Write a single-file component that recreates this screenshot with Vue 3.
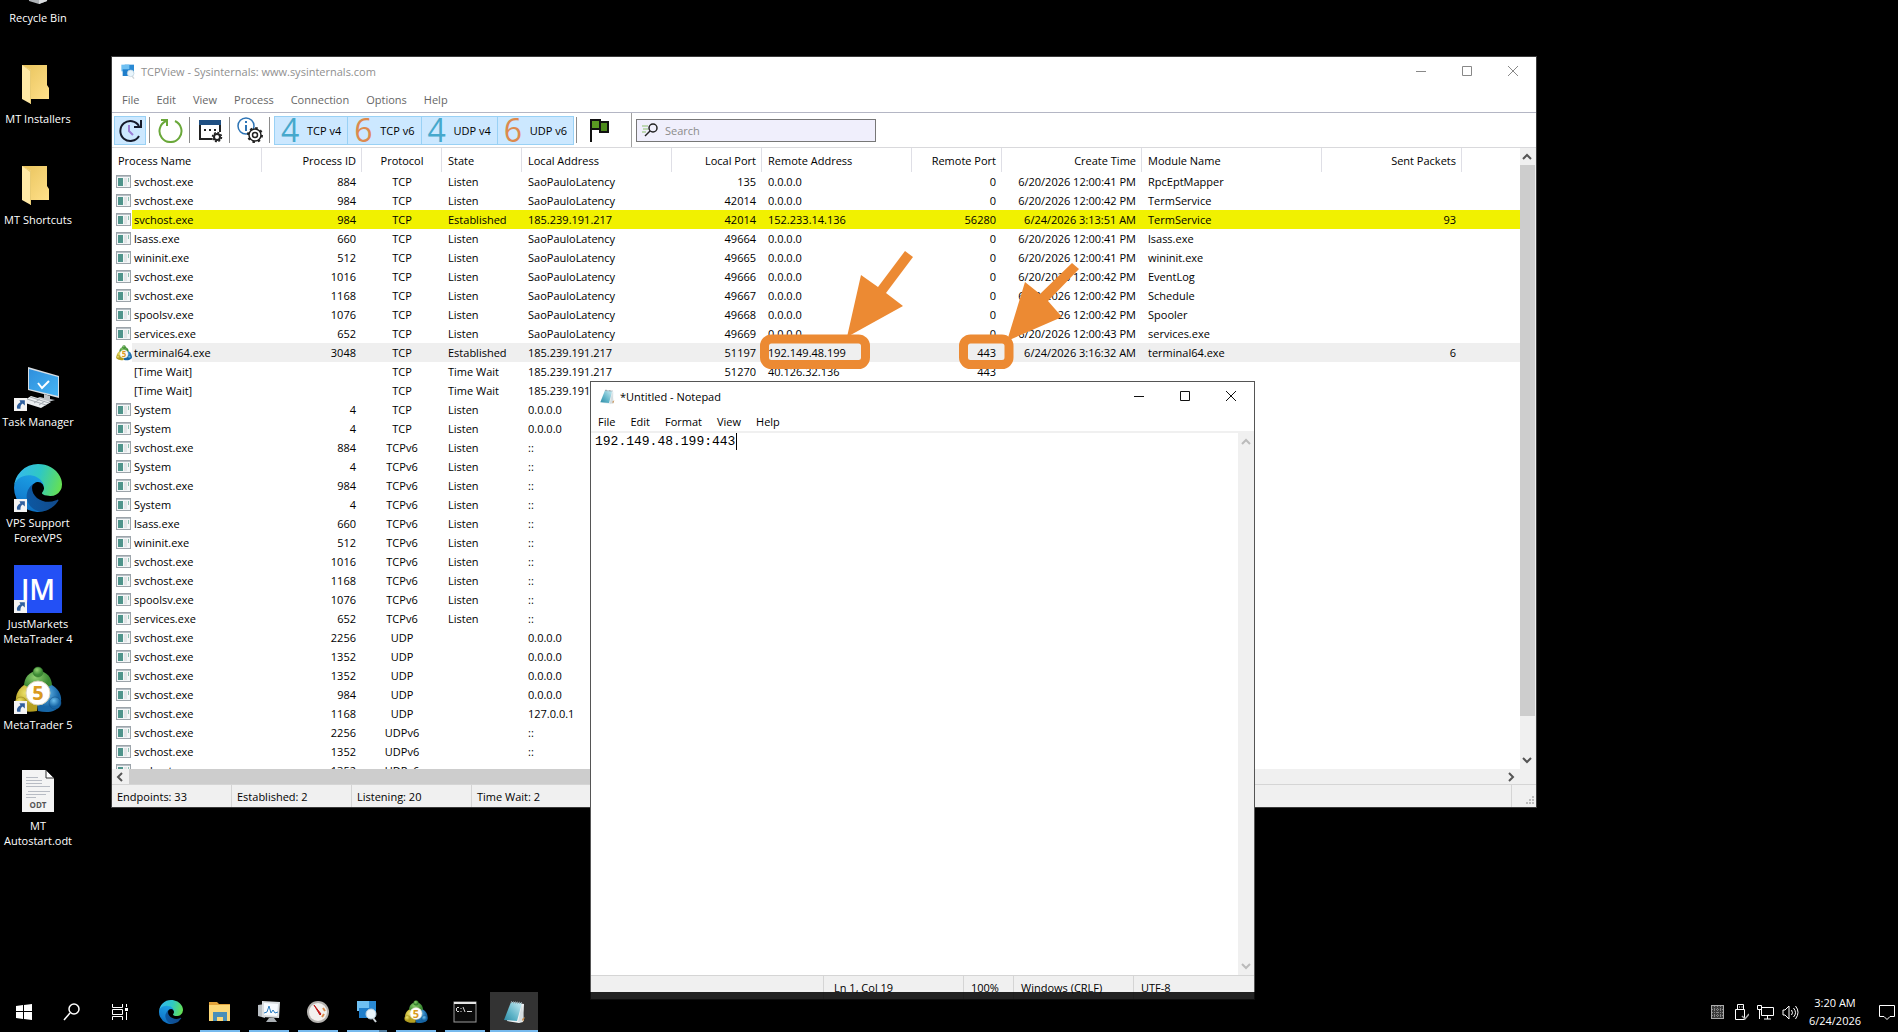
<script setup>
import { ref } from 'vue'

const columns = [
  { key: 'name', label: 'Process Name', width: 150, align: 'left' },
  { key: 'pid', label: 'Process ID', width: 100, align: 'right' },
  { key: 'proto', label: 'Protocol', width: 80, align: 'center' },
  { key: 'state', label: 'State', width: 80, align: 'left' },
  { key: 'laddr', label: 'Local Address', width: 150, align: 'left' },
  { key: 'lport', label: 'Local Port', width: 90, align: 'right' },
  { key: 'raddr', label: 'Remote Address', width: 150, align: 'left' },
  { key: 'rport', label: 'Remote Port', width: 90, align: 'right' },
  { key: 'time', label: 'Create Time', width: 140, align: 'right' },
  { key: 'module', label: 'Module Name', width: 180, align: 'left' },
  { key: 'sent', label: 'Sent Packets', width: 140, align: 'right' }
]

const host = 'SaoPauloLatency'
const any = '0.0.0.0'
const vps = '185.239.191.217'

const rows = [
  ['svchost.exe', 884, 'TCP', 'Listen', host, 135, any, 0, '6/20/2026 12:00:41 PM', 'RpcEptMapper'],
  ['svchost.exe', 984, 'TCP', 'Listen', host, 42014, any, 0, '6/20/2026 12:00:42 PM', 'TermService'],
  ['svchost.exe', 984, 'TCP', 'Established', vps, 42014, '152.233.14.136', 56280, '6/24/2026 3:13:51 AM', 'TermService', 93],
  ['lsass.exe', 660, 'TCP', 'Listen', host, 49664, any, 0, '6/20/2026 12:00:41 PM', 'lsass.exe'],
  ['wininit.exe', 512, 'TCP', 'Listen', host, 49665, any, 0, '6/20/2026 12:00:41 PM', 'wininit.exe'],
  ['svchost.exe', 1016, 'TCP', 'Listen', host, 49666, any, 0, '6/20/2026 12:00:42 PM', 'EventLog'],
  ['svchost.exe', 1168, 'TCP', 'Listen', host, 49667, any, 0, '6/20/2026 12:00:42 PM', 'Schedule'],
  ['spoolsv.exe', 1076, 'TCP', 'Listen', host, 49668, any, 0, '6/20/2026 12:00:42 PM', 'Spooler'],
  ['services.exe', 652, 'TCP', 'Listen', host, 49669, any, 0, '6/20/2026 12:00:43 PM', 'services.exe'],
  ['terminal64.exe', 3048, 'TCP', 'Established', vps, 51197, '192.149.48.199', 443, '6/24/2026 3:16:32 AM', 'terminal64.exe', 6],
  ['[Time Wait]', '', 'TCP', 'Time Wait', vps, 51270, '40.126.32.136', 443],
  ['[Time Wait]', '', 'TCP', 'Time Wait', vps],
  ['System', 4, 'TCP', 'Listen', any],
  ['System', 4, 'TCP', 'Listen', any],
  ['svchost.exe', 884, 'TCPv6', 'Listen', '::'],
  ['System', 4, 'TCPv6', 'Listen', '::'],
  ['svchost.exe', 984, 'TCPv6', 'Listen', '::'],
  ['System', 4, 'TCPv6', 'Listen', '::'],
  ['lsass.exe', 660, 'TCPv6', 'Listen', '::'],
  ['wininit.exe', 512, 'TCPv6', 'Listen', '::'],
  ['svchost.exe', 1016, 'TCPv6', 'Listen', '::'],
  ['svchost.exe', 1168, 'TCPv6', 'Listen', '::'],
  ['spoolsv.exe', 1076, 'TCPv6', 'Listen', '::'],
  ['services.exe', 652, 'TCPv6', 'Listen', '::'],
  ['svchost.exe', 2256, 'UDP', '', any],
  ['svchost.exe', 1352, 'UDP', '', any],
  ['svchost.exe', 1352, 'UDP', '', any],
  ['svchost.exe', 984, 'UDP', '', any],
  ['svchost.exe', 1168, 'UDP', '', '127.0.0.1'],
  ['svchost.exe', 2256, 'UDPv6', '', '::'],
  ['svchost.exe', 1352, 'UDPv6', '', '::'],
  ['svchost.exe', 1352, 'UDPv6', '', '::']
].map((cells) => ({
  cells: columns.map((c, i) => cells[i] ?? ''),
  icon: cells[0] === 'terminal64.exe' ? 'mt5' : cells[0][0] === '[' ? '' : 'exe',
  tone: cells[7] === 56280 ? 'updated' : cells[0] === 'terminal64.exe' ? 'selected' : ''
}))

const filters = [
  { digit: '4', label: 'TCP v4' },
  { digit: '6', label: 'TCP v6' },
  { digit: '4', label: 'UDP v4' },
  { digit: '6', label: 'UDP v6' }
]

const desktopItems = [
  { icon: 'bin', label: 'Recycle Bin' },
  { icon: 'folder', label: 'MT Installers' },
  { icon: 'folder', label: 'MT Shortcuts' },
  null,
  { icon: 'taskmgr', label: 'Task Manager', shortcut: true },
  { icon: 'edge', label: 'VPS Support ForexVPS', shortcut: true },
  { icon: 'jm', label: 'JustMarkets MetaTrader 4', shortcut: true, mark: 'JM' },
  { icon: 'mt5', label: 'MetaTrader 5', shortcut: true, mark: '5' },
  { icon: 'odt', label: 'MT Autostart.odt', mark: 'ODT' }
]

const apps = [
  { icon: 'edge', title: 'Microsoft Edge' },
  { icon: 'explorer', title: 'File Explorer', open: true },
  { icon: 'perfmon', title: 'Resource Monitor', open: true },
  { icon: 'gauge', title: 'Latency Gauge', open: true },
  { icon: 'tcpview', title: 'TCPView', open: true, multi: true },
  { icon: 'mt5', title: 'MetaTrader 5', open: true, mark: '5' },
  { icon: 'cmd', title: 'Command Prompt', open: true },
  { icon: 'notepad', title: 'Notepad', open: true, active: true }
]

const query = ref('')
const note = ref('192.149.48.199:443')
</script>

<template>
  <div class="desktop">
    <svg class="sprite" aria-hidden="true">
      <defs>
        <linearGradient id="edgeNavy" x1="0" y1="0.5" x2="1" y2="0.5"><stop offset="0" stop-color="#0c59a4" /><stop offset="1" stop-color="#114a8b" /></linearGradient>
        <linearGradient id="edgeBlue" x1="0.6" y1="0.1" x2="0.3" y2="1"><stop offset="0" stop-color="#1b9de2" /><stop offset="0.6" stop-color="#1482d2" /><stop offset="1" stop-color="#0a66b8" /></linearGradient>
        <linearGradient id="edgeGreen" x1="0" y1="0.4" x2="1" y2="0.6"><stop offset="0" stop-color="#35b8ee" /><stop offset="0.5" stop-color="#2fc8c4" /><stop offset="1" stop-color="#66e052" /></linearGradient>
        <linearGradient id="folderBack" x1="0" y1="0" x2="1" y2="1"><stop offset="0" stop-color="#e8c35c" /><stop offset="1" stop-color="#ffe08a" /></linearGradient>
        <linearGradient id="screen" x1="0" y1="0" x2="1" y2="1"><stop offset="0" stop-color="#2f8fdc" /><stop offset="1" stop-color="#45b4f5" /></linearGradient>
        <linearGradient id="pad" x1="1" y1="0" x2="0" y2="1"><stop offset="0" stop-color="#cfeef5" /><stop offset="0.6" stop-color="#5fb4c8" /><stop offset="1" stop-color="#2f8ba5" /></linearGradient>
        <radialGradient id="gr" cx="0.4" cy="0.3"><stop offset="0" stop-color="#8fd070" /><stop offset="1" stop-color="#3c8a34" /></radialGradient>
        <radialGradient id="ye" cx="0.4" cy="0.3"><stop offset="0" stop-color="#ece26a" /><stop offset="1" stop-color="#b5a021" /></radialGradient>
        <radialGradient id="bl" cx="0.4" cy="0.3"><stop offset="0" stop-color="#6cbfee" /><stop offset="1" stop-color="#1766a6" /></radialGradient>
      </defs>

      <symbol id="i-bin" viewBox="0 0 48 48"><path d="M12 4h24l-3 38-8 3-10-3z" fill="#aeb2b6" /><path d="M25 45l8-3 1-8-9 5z" fill="#d9dcde" /></symbol>

      <symbol id="i-folder" viewBox="0 0 48 48">
        <path d="M8 5h25v20l2 3v11H8z" fill="url(#folderBack)" />
        <path d="M8 5l9 5v34l-9-5z" fill="#ffe9a6" />
        <path d="M8 5l9 5v34l-1-1V11z" fill="#e9cb72" />
      </symbol>

      <symbol id="i-taskmgr" viewBox="0 0 48 48">
        <path d="M14 4l31 9v22l-31-8z" fill="#d7dde2" />
        <path d="M15 6l29 8v19l-29-7z" fill="url(#screen)" />
        <path d="M24 20l4 5 7-7" fill="none" stroke="#fff" stroke-width="2" />
        <path d="M30 31l6 2v3l5 1-7 2-13-3 5-2 4 1z" fill="#bfc4c9" />
        <path d="M17 33l20 6-10 6-19-6z" fill="#eceff1" />
        <path d="M13 36l19 6M16 34l19 6M20 40l6-4M25 42l6-4" stroke="#a6adb3" stroke-width="1" />
      </symbol>

      <symbol id="i-edge" viewBox="0 0 256 256">
        <path d="M231.05 190.54c-3.4 1.77-6.9 3.36-10.51 4.74a101.93 101.93 0 0 1-35.9 6.46c-47.32 0-88.54-32.55-88.54-74.32A31.48 31.48 0 0 1 112.5 99.98c-42.8 1.8-53.8 46.4-53.8 72.53 0 73.88 68.09 81.37 82.76 81.37 7.91 0 19.84-2.3 27-4.56l1.31-.44a128.34 128.34 0 0 0 66.6-52.8 4 4 0 0 0-5.32-5.54z" fill="url(#edgeNavy)" />
        <path d="M105.73 241.42a79.2 79.2 0 0 1-22.74-21.34 80.72 80.72 0 0 1 29.53-120.1c3.12-1.47 8.45-4.13 15.54-4a32.35 32.35 0 0 1 25.69 13 31.88 31.88 0 0 1 6.36 18.66c0-.21 24.46-79.6-80-79.6-43.9 0-80 41.66-80 78.21a130.15 130.15 0 0 0 12.11 56 128 128 0 0 0 156.38 67.11 75.55 75.55 0 0 1-62.78-8z" fill="url(#edgeBlue)" />
        <path d="M152.33 148.86c-.81 1.05-3.3 2.5-3.3 5.66 0 2.61 1.7 5.12 4.72 7.23 14.38 10 41.49 8.68 41.56 8.68a59.56 59.56 0 0 0 30.27-8.35 61.38 61.38 0 0 0 30.43-52.88c.26-22.41-8-37.31-11.34-43.91C223.46 23.84 177.72 0 128 0A128 128 0 0 0 0 126.2c.48-36.54 36.8-66.05 80-66.05 3.5 0 23.46.34 42 10.07 16.34 8.58 24.9 18.94 30.85 29.21 6.18 10.67 7.28 24.15 7.28 29.52 0 5.37-2.74 13.33-7.8 19.91z" fill="url(#edgeGreen)" />
      </symbol>

      <symbol id="i-jm" viewBox="0 0 48 48"><rect width="48" height="48" fill="#2350f5" /></symbol>

      <symbol id="i-mt5" viewBox="0 0 48 48">
        <path d="M24 5c9 0 14 7 14 15l-8 6H18l-8-6C10 12 15 5 24 5z" fill="url(#gr)" />
        <path d="M10 19c-7 5-10 13-7 20 4 8 13 7 20 6l2-18z" fill="url(#ye)" />
        <path d="M38 19c8 5 11 13 8 20-4 8-14 8-22 6l-2-18z" fill="url(#bl)" />
        <circle cx="24" cy="6" r="5" fill="url(#gr)" stroke="#2c6b2a" stroke-width="0.5" />
        <circle cx="7" cy="37" r="6" fill="url(#ye)" stroke="#8a7a18" stroke-width="0.5" />
        <circle cx="41" cy="37" r="6" fill="url(#bl)" stroke="#124f84" stroke-width="0.5" />
        <circle cx="24" cy="27" r="12" fill="#fff" stroke="#d8d2b8" stroke-width="1" />
      </symbol>

      <symbol id="i-odt" viewBox="0 0 48 48">
        <path d="M8 3h24l8 8v34H8z" fill="#f4f4f4" />
        <path d="M32 3l8 8h-8z" fill="#fff" stroke="#333" stroke-width="1" />
        <path d="M12 10.5h12M12 13.500h16M12 16.500h16M12 19.500h24M14 24.500h22M12 27.500h20M12 30.500h10" stroke="#b8bcc4" stroke-width="1" />
      </symbol>

      <symbol id="i-shortcut" viewBox="0 0 12 12">
        <rect width="12" height="12" fill="#f4f4f4" />
        <path d="M5 2h5v5L8 5C6 6 6 8 6 10H3C2 7 4 5 6 4z" fill="#2f5f9e" />
      </symbol>

      <symbol id="i-explorer" viewBox="0 0 24 24">
        <path d="M1 2h8l2 2h11v17H1z" fill="#e2a33b" /><path d="M1 5h21v16H1z" fill="#fcd878" />
        <path d="M5 12h14v9h-4v-4H9v4H5z" fill="#4a8fb8" />
      </symbol>
      <symbol id="i-perfmon" viewBox="0 0 24 24">
        <path d="M1 5l7-1v14l-7-2z" fill="#b9bfc4" /><path d="M5 1l18 1-1 16-17-1z" fill="#d9dde0" />
        <path d="M7 3l14 1-1 12-13-1z" fill="#f7fbff" /><path d="M7 13l3-1 2-6 2 7 2-3 2 3 3-1" fill="none" stroke="#2b7cc0" stroke-width="1" />
        <path d="M12 18h5l3 4H9z" fill="#aab0b5" />
      </symbol>
      <symbol id="i-gauge" viewBox="0 0 24 24">
        <ellipse cx="12" cy="12" rx="11" ry="11" fill="#b5b3b0" /><circle cx="12" cy="12" r="9" fill="#f3f1ee" />
        <path d="M14 15L8 5l7 9z" fill="#c01818" stroke="#c01818" stroke-width="1" /><path d="M17 8l2 3M18 14l-2 3" stroke="#d98a4a" stroke-width="2" />
      </symbol>
      <symbol id="i-tcpview" viewBox="0 0 24 24">
        <rect x="7" y="1" width="14" height="13" fill="#2a8ad4" /><rect x="2" y="1" width="12" height="10" fill="#6fc0f2" />
        <rect x="4" y="8" width="12" height="10" fill="#1f7ecb" />
        <circle cx="16" cy="14" r="5" fill="#e9f5fc" stroke="#b9cfdd" stroke-width="1" /><path d="M18 18l3 4" stroke="#cfd6da" stroke-width="2" />
      </symbol>
      <symbol id="i-cmd" viewBox="0 0 24 24">
        <rect x="1" y="2" width="22" height="20" fill="#0a0a0a" stroke="#9a9a9a" stroke-width="1" /><rect x="1" y="2" width="22" height="2" fill="#e6e6e6" />
        <path d="M4 7.500h2M3.500 8v3M4 11.500h2M8 8v1M8 11v1M10 7l2 5" stroke="#ddd" stroke-width="1" /><path d="M14 11.500h5" stroke="#ddd" stroke-width="1" />
      </symbol>
      <symbol id="i-notepad" viewBox="0 0 24 24">
        <path d="M10 2l12 2-1 18-4 1L5 21z" fill="#eef3f5" /><path d="M9 2l11 1-5 18-13-1z" fill="url(#pad)" />
        <path d="M9 2l11 1" stroke="#8a949a" stroke-width="2" stroke-dasharray="1 1" /><path d="M20 4l2 17-6 1z" fill="#d5dde0" /><path d="M20 19l3-2-2 5z" fill="#c98d4e" />
      </symbol>
      <symbol id="i-exe" viewBox="0 0 16 14">
        <rect x="0.5" y="0.5" width="14" height="12" fill="#f3f6f7" stroke="#9ca4aa" stroke-width="1" /><path d="M1 1.500h13" stroke="#b7bfc5" stroke-width="1" />
        <rect x="2" y="3" width="5" height="8" fill="#4f948b" /><rect x="8" y="3" width="3" height="8" fill="#e2e5e7" /><rect x="12" y="3" width="1" height="4" fill="#8fbfb2" />
      </symbol>
    </svg>

    <nav class="icons" aria-label="Desktop">
      <template v-for="(item, i) in desktopItems" :key="i">
        <button v-if="item" class="shortcut">
          <span class="pic">
            <svg width="48" height="48"><use :href="`#i-${item.icon}`" /></svg>
            <span v-if="item.mark" :class="['mark', `mark-${item.icon}`]">{{ item.mark }}</span>
            <svg v-if="item.shortcut" class="arrow" width="13" height="13"><use href="#i-shortcut" /></svg>
          </span>
          <span class="caption">{{ item.label }}</span>
        </button>
        <span v-else class="shortcut"></span>
      </template>
    </nav>

    <section class="window tcpview">
      <header class="titlebar">
        <svg width="16" height="16"><use href="#i-tcpview" /></svg>
        <h1>TCPView - Sysinternals: www.sysinternals.com</h1>
        <div class="controls">
          <button aria-label="Minimize"><svg width="11" height="11"><path d="M0 5.500h10" /></svg></button>
          <button aria-label="Maximize"><svg width="11" height="11"><path d="M.5.5h9v9h-9z" /></svg></button>
          <button aria-label="Close"><svg width="11" height="11"><path d="M0 0l10 10M10 0L0 10" /></svg></button>
        </div>
      </header>
      <nav class="menu">
        <button v-for="m in ['File', 'Edit', 'View', 'Process', 'Connection', 'Options', 'Help']" :key="m">{{ m }}</button>
      </nav>
      <div class="toolbar">
        <button class="tool on" aria-label="Auto refresh">
          <svg width="26" height="26" fill="none" stroke-width="2"><path d="M22 19A10 10 0 1 1 22 9" stroke="#151b2c" /><path d="M24 3v7h-7" stroke="#151b2c" /><path d="M12 8v6l4 4" stroke="#9a7fd6" /></svg>
        </button>
        <i class="rule"></i>
        <button class="tool" aria-label="Refresh">
          <svg width="26" height="26" fill="none" stroke="#6aa83a" stroke-width="2"><path d="M18 4A11 11 0 1 1 9 4" /><path d="M4 3h6v6" /></svg>
        </button>
        <i class="rule"></i>
        <button class="tool" aria-label="Configure columns">
          <svg width="26" height="26" fill="none"><path d="M2 3h22v5H2z" fill="#1f4f82" /><path d="M3 8v14h12M23 8v7" stroke="#222" stroke-width="2" /><path d="M7 13h2M12 13h2M17 13h2" stroke="#222" stroke-width="2" /><circle cx="20" cy="20" r="3" stroke="#222" stroke-width="2" /><circle cx="20" cy="20" r="4.500" stroke="#222" stroke-width="1.500" stroke-dasharray="2 1.500" /></svg>
        </button>
        <i class="rule"></i>
        <button class="tool" aria-label="Process properties">
          <svg width="26" height="26" fill="none"><circle cx="9" cy="9" r="8" stroke="#2d74b5" stroke-width="1.500" /><path d="M9 8v6M9 4v2" stroke="#2d74b5" stroke-width="2" /><circle cx="18" cy="18" r="6" fill="#fff" stroke="#222" stroke-width="1.500" /><circle cx="18" cy="18" r="7" stroke="#222" stroke-width="2" stroke-dasharray="2.500 3" /><circle cx="18" cy="18" r="2.500" stroke="#222" stroke-width="1.500" /></svg>
        </button>
        <i class="rule"></i>
        <div class="filters">
          <button v-for="f in filters" :key="f.label" :class="['filter', `ip${f.digit}`]"><b>{{ f.digit }}</b>{{ f.label }}</button>
        </div>
        <i class="rule"></i>
        <button class="tool flag" aria-label="Resolve addresses">
          <svg width="22" height="26" stroke="#111" stroke-width="2"><path d="M2 2v23" /><path d="M2 3h9v9H2z" fill="#5a9a22" /><path d="M11 5h8v10h-8z" fill="#4c8a1a" /></svg>
        </button>
        <i class="edge"></i>
        <label class="search">
          <svg width="18" height="14" fill="none"><path d="M1 3h6M2 6h5M1 9h4" stroke="#8bbf6a" stroke-width="1" /><circle cx="12" cy="5" r="4" stroke="#222" stroke-width="1.500" /><path d="M9 8l-5 5" stroke="#222" stroke-width="1.500" /></svg>
          <input v-model="query" type="text" placeholder="Search" aria-label="Search" />
        </label>
      </div>

      <div class="listing">
        <div class="clip">
          <table>
            <colgroup><col v-for="c in columns" :key="c.key" :style="{ width: c.width + 'px' }" /><col /></colgroup>
            <thead>
              <tr><th v-for="c in columns" :key="c.key" :class="c.align" scope="col">{{ c.label }}</th><td></td></tr>
            </thead>
            <tbody>
              <tr v-for="(row, r) in rows" :key="r" :class="row.tone">
                <td v-for="(cell, i) in row.cells" :key="i" :class="columns[i].align">
                  <span v-if="i === 0" class="proc">
                    <span class="pic small">
                      <svg width="16" height="16"><use v-if="row.icon" :href="`#i-${row.icon}`" /></svg>
                      <span v-if="row.icon === 'mt5'" class="mark mark-mt5">5</span>
                    </span>{{ cell }}
                  </span>
                  <template v-else>{{ cell }}</template>
                </td>
                <td></td>
              </tr>
            </tbody>
          </table>
        </div>
        <div class="vscroll">
          <svg width="16" height="17"><path d="M3 11l4-4 4 4" /></svg>
          <span class="thumb"></span>
          <svg width="16" height="17"><path d="M3 6l4 4 4-4" /></svg>
        </div>
      </div>
      <div class="hscroll">
        <svg width="17" height="15"><path d="M10 4L6 8l4 4" /></svg>
        <span class="thumb"></span>
        <svg width="17" height="15"><path d="M7 4l4 4-4 4" /></svg>
      </div>
      <footer class="status">
        <span>Endpoints: 33</span><span>Established: 2</span><span>Listening: 20</span><span class="wide">Time Wait: 2</span>
        <svg width="24" height="22" fill="#bdbdbd"><path d="M20 11h2v2h-2zM17 14h2v2h-2zM20 14h2v2h-2zM14 17h2v2h-2zM17 17h2v2h-2zM20 17h2v2h-2z" /></svg>
      </footer>
    </section>

    <svg class="marks" width="330" height="130" viewBox="755 245 330 130" fill="#ec8a33" aria-hidden="true">
      <rect x="764.500" y="339" width="101" height="25.500" rx="7" fill="none" stroke="#ec8a33" stroke-width="9" />
      <rect x="963.500" y="339" width="45.500" height="25.500" rx="7" fill="none" stroke="#ec8a33" stroke-width="9" />
      <path d="M847 337l14-62 17 12 27-36 8 6-27 36 17 13z" />
      <path d="M1007 341l18-59 15 12 32-31 7 6-31 32 14 16z" />
    </svg>

    <section class="window notepad">
      <header class="titlebar">
        <svg width="16" height="16"><use href="#i-notepad" /></svg>
        <h1>*Untitled - Notepad</h1>
        <div class="controls">
          <button aria-label="Minimize"><svg width="11" height="11"><path d="M0 5.500h10" /></svg></button>
          <button aria-label="Maximize"><svg width="11" height="11"><path d="M.5.5h9v9h-9z" /></svg></button>
          <button aria-label="Close"><svg width="11" height="11"><path d="M0 0l10 10M10 0L0 10" /></svg></button>
        </div>
      </header>
      <nav class="menu">
        <button v-for="m in ['File', 'Edit', 'Format', 'View', 'Help']" :key="m">{{ m }}</button>
      </nav>
      <div class="editor">
        <textarea v-model="note" aria-label="Text editor" spellcheck="false"></textarea>
        <i class="caret"></i>
        <div class="vscroll off">
          <svg width="16" height="17"><path d="M4 11l4-4 4 4" /></svg>
          <svg width="16" height="17"><path d="M4 6l4 4 4-4" /></svg>
        </div>
      </div>
      <footer class="status">
        <span class="blank"></span><span class="pos">Ln 1, Col 19</span><span class="zoom">100%</span><span class="eol">Windows (CRLF)</span><span class="enc">UTF-8</span>
      </footer>
    </section>

    <footer class="taskbar">
      <div class="system">
        <button aria-label="Start"><svg width="16" height="16" fill="#fff"><path d="M0 2l7-1v6H0zM8 1l8-1v7H8zM0 8h7v7l-7-1zM8 8h8v8l-8-1z" /></svg></button>
        <button aria-label="Search"><svg width="18" height="18" fill="none" stroke="#fff" stroke-width="1.500"><circle cx="11" cy="6" r="5" /><path d="M7 10l-6 7" /></svg></button>
        <button aria-label="Task View"><svg width="18" height="18" fill="none" stroke="#fff"><path d="M1.500 1v3.500h10V1M1.500 17v-3.500h10V17M1.500 6.500h10v5h-10zM15.500 1v3M15.500 9v8" /><path d="M14 6.500h3" stroke-width="3" /></svg></button>
      </div>
      <div class="apps">
        <button v-for="a in apps" :key="a.title" :aria-label="a.title" :class="{ open: a.open, active: a.active, multi: a.multi }">
          <span class="pic medium">
            <svg width="24" height="24"><use :href="`#i-${a.icon}`" /></svg>
            <span v-if="a.mark" class="mark mark-mt5">{{ a.mark }}</span>
          </span>
        </button>
      </div>
      <div class="tray">
        <svg width="13" height="14"><rect x=".5" y=".5" width="12" height="13" fill="#3a3a3a" stroke="#aaa" /><path d="M3.500 1v12M6.500 1v12M9.500 1v12M1 4.500h11M1 7.500h11M1 10.500h11" stroke="#888" stroke-dasharray="1 1" /></svg>
        <svg width="14" height="17" fill="none" stroke="#fff"><path d="M2.500 5.500V.5h6v5M.5 5.500h9v10h-9zM4 3h1M6.500 3h1" /><path d="M7 12l3 3 4-5" stroke="#aaa" stroke-width="1.500" /></svg>
        <svg width="17" height="15" fill="none" stroke="#fff"><path d="M4.500 2.500h12v8h-12zM10.500 11v3M7 14h7M.5.5h4v4h-4zM2.500 5v9" /></svg>
        <svg width="17" height="15" fill="none" stroke="#fff"><path d="M1 5h2l4-4v13L3 10H1zM9.500 5q2 3 0 5M11.500 3q4 5 0 9M13.500 1q5 6 0 13" /></svg>
        <time datetime="2026-06-24T03:20">3:20 AM<br />6/24/2026</time>
        <button aria-label="Notifications"><svg width="17" height="17" fill="none" stroke="#fff"><path d="M.5 1.500h15v11H11l-3 3-3-3H.5z" /></svg></button>
      </div>
    </footer>
  </div>
</template>

<style>
body {
  background: #000;
}
</style>

<style scoped>
.desktop {
  position: relative;
  height: 100vh;
  overflow: hidden;
  background: #000;
  font: 11px/19px 'Open Sans', 'Noto Sans', sans-serif;
  color: #000;
}
.sprite {
  position: absolute;
  width: 0;
  height: 0;
}
svg {
  display: block;
  flex: none;
}
button {
  border: 0;
  padding: 0;
  background: none;
  font: inherit;
  color: inherit;
}

/* Desktop shortcuts */
.icons {
  display: flex;
  flex-direction: column;
  width: 76px;
  margin-top: -41px;
}
.shortcut {
  display: flex;
  flex: none;
  flex-direction: column;
  align-items: center;
  gap: 3px;
  height: 101px;
  color: #fff;
}
.pic {
  position: relative;
  flex: none;
}
.arrow {
  position: absolute;
  left: 0;
  bottom: 0;
}
.mark {
  position: absolute;
  left: 0;
  right: 0;
  text-align: center;
  font-weight: 700;
}
.mark-jm {
  top: 0;
  font-size: 28px;
  font-weight: 600;
  line-height: 48px;
}
.mark-mt5 {
  top: 3px;
  color: #d99a20;
  font-size: 20px;
  line-height: 48px;
}
.mark-odt {
  top: 32px;
  color: #555;
  font-size: 8px;
  line-height: 12px;
}
.medium .mark-mt5 {
  top: 2px;
  font-size: 11px;
  line-height: 24px;
}
.small .mark-mt5 {
  top: 1px;
  font-size: 8px;
  line-height: 16px;
}
.caption {
  line-height: 15px;
}

/* Windows */
.window {
  position: absolute;
  display: flex;
  flex-direction: column;
  box-sizing: border-box;
  background: #fff;
}
.tcpview {
  left: 111px;
  right: 361px;
  top: 56px;
  height: 752px;
  border: 1px solid #3a3a3a;
}
.notepad {
  left: 590px;
  top: 381px;
  bottom: 32px;
  width: 665px;
  border: 1px solid #555;
}
.titlebar {
  display: flex;
  align-items: center;
  flex: none;
  height: 29px;
  padding-left: 8px;
  gap: 5px;
}
.titlebar h1 {
  margin: 0;
  font-size: 11px;
  font-weight: 400;
}
.controls {
  display: flex;
  margin-left: auto;
}
.controls button {
  display: flex;
  align-items: center;
  justify-content: center;
  width: 46px;
  height: 29px;
}
.controls path {
  fill: none;
  stroke: #111;
}
.menu {
  display: flex;
  flex: none;
  box-sizing: border-box;
}
.menu button {
  line-height: 19px;
}
.tcpview .titlebar,
.tcpview .menu {
  color: #666;
}
.tcpview .titlebar h1 {
  color: #8f8f8f;
}
.tcpview .controls path {
  stroke: #888;
}
.tcpview .menu {
  height: 27px;
  padding: 4px 10px 0;
  gap: 17px;
  align-items: flex-start;
  border-bottom: 1px solid #b4b6c4;
}

.toolbar {
  display: flex;
  align-items: center;
  flex: none;
  height: 35px;
  box-sizing: border-box;
  padding-left: 2px;
  border-bottom: 1px solid #d9d9dc;
}
.tool {
  display: flex;
  align-items: center;
  justify-content: center;
  box-sizing: border-box;
  width: 32px;
  height: 29px;
}
.rule {
  width: 1px;
  height: 26px;
  margin: 0 4px 0 3px;
  background: #8c8c8c;
}
.edge {
  width: 1px;
  height: 34px;
  margin: 0 4px 0 13px;
  background: #a0a0a0;
}
.on,
.filter {
  background: #cce8ff;
  border: 1px solid #99d1f5;
}
.filters {
  display: flex;
}
.filter {
  display: flex;
  align-items: center;
  gap: 8px;
  height: 29px;
  box-sizing: border-box;
  padding: 0 6px;
  margin-right: -1px;
}
.filter b {
  width: 18px;
  font: 400 32px/28px 'Open Sans', 'Noto Sans', sans-serif;
}
.ip4 b {
  color: #46a8cc;
}
.ip6 b {
  color: #dc8a4e;
}
.flag {
  width: 37px;
}
.search {
  display: flex;
  align-items: center;
  gap: 6px;
  box-sizing: border-box;
  width: 240px;
  height: 23px;
  padding-left: 4px;
  border: 1px solid #777;
  background: #f0effc;
}
.search input {
  flex: 1;
  min-width: 0;
  border: 0;
  padding: 0;
  background: none;
  outline: 0;
  font: inherit;
}
.search input::placeholder {
  color: #8b8b8b;
}

.listing {
  display: flex;
  flex: 1;
  min-height: 0;
}
.clip {
  flex: 1;
  min-width: 0;
  overflow: hidden;
}
table {
  width: 100%;
  table-layout: fixed;
  border-collapse: separate;
  border-spacing: 0;
}
th,
td {
  height: 19px;
  padding: 0 5px 0 6px;
  font-weight: 400;
  line-height: 19px;
  white-space: nowrap;
  overflow: hidden;
}
th {
  height: 24px;
  box-sizing: border-box;
  border-right: 1px solid #dfdfe6;
}
td {
  padding-right: 6px;
}
td:first-child {
  padding-left: 4px;
}
.left {
  text-align: left;
}
.right {
  text-align: right;
}
.center {
  text-align: center;
}
.proc {
  display: flex;
  align-items: center;
  gap: 2px;
  height: 19px;
}
.updated td {
  background: #f1f100;
}
.selected td {
  background: #efefef;
}
.updated td:first-child {
  background: linear-gradient(to right, #fff 20px, #f1f100 20px);
}
.selected td:first-child {
  background: linear-gradient(to right, #fff 20px, #efefef 20px);
}
.vscroll,
.hscroll {
  display: flex;
  flex: none;
  justify-content: space-between;
  background: #f0f0f0;
}
.vscroll {
  flex-direction: column;
}
.vscroll path,
.hscroll path {
  fill: none;
  stroke: #555;
  stroke-width: 2;
}
.vscroll.off path {
  stroke: #bbb;
}
.thumb {
  background: #cdcdcd;
}
.vscroll .thumb {
  flex: 1;
  margin-right: 1px;
  margin-bottom: 36px;
}
.hscroll {
  height: 15px;
  padding-right: 17px;
}
.hscroll .thumb {
  flex: 1;
  margin-right: 280px;
}
.status {
  display: flex;
  flex: none;
  box-sizing: border-box;
  background: #f0f0f0;
  border-top: 1px solid #d5d5d5;
}
.tcpview .status {
  height: 23px;
}
.status span {
  box-sizing: border-box;
  width: 120px;
  padding-left: 5px;
  border-right: 1px solid #d5d5d5;
  line-height: 24px;
}
.tcpview .status .wide {
  flex: 1;
}

/* Notepad */
.notepad .menu {
  height: 22px;
  padding: 0 7px;
  gap: 15px;
  border-bottom: 2px solid #f0f0f0;
}
.editor {
  position: relative;
  display: flex;
  flex: 1;
  font: 13px/17px 'Liberation Mono', 'DejaVu Sans Mono', monospace;
}
.editor textarea {
  flex: 1;
  border: 0;
  padding: 0 4px;
  background: none;
  outline: 0;
  resize: none;
  font: inherit;
  color: inherit;
}
.caret {
  position: absolute;
  left: calc(18ch + 5px);
  top: 0;
  width: 1px;
  height: 17px;
  background: #000;
}
.notepad .status {
  height: 24px;
}
.notepad .status span {
  padding-left: 7px;
}
.notepad .status .blank {
  flex: 1;
}
.notepad .status .pos {
  width: 140px;
  padding-left: 10px;
}
.notepad .status .zoom {
  width: 50px;
}
.notepad .status .enc {
  border: 0;
}

/* Taskbar */
.taskbar {
  position: absolute;
  left: 0;
  right: 0;
  bottom: 0;
  display: flex;
  height: 40px;
  background: rgba(0, 0, 0, 0.86);
  color: #fff;
}
.system,
.apps {
  display: flex;
}
.apps {
  gap: 1px;
  margin-left: 3px;
}
.taskbar button {
  display: flex;
  align-items: center;
  justify-content: center;
  width: 48px;
  height: 40px;
}
.open {
  background: linear-gradient(#76b9ed, #76b9ed) center bottom / 40px 2px no-repeat;
}
.taskbar .multi {
  background-image: linear-gradient(to right, #76b9ed 32px, #4f7c9f 32px);
}
.taskbar .active {
  background-size: 48px 2px;
  background-color: #333;
}
.tray {
  display: flex;
  align-items: center;
  margin-left: auto;
}
.tray > svg {
  margin-right: 8px;
}
.tray > svg:first-child {
  margin-right: 11px;
}
.tray time {
  width: 56px;
  text-align: center;
  line-height: 18px;
}
.tray button {
  width: 22px;
  margin-left: 13px;
}
.marks {
  position: absolute;
  left: 755px;
  top: 245px;
}
</style>
